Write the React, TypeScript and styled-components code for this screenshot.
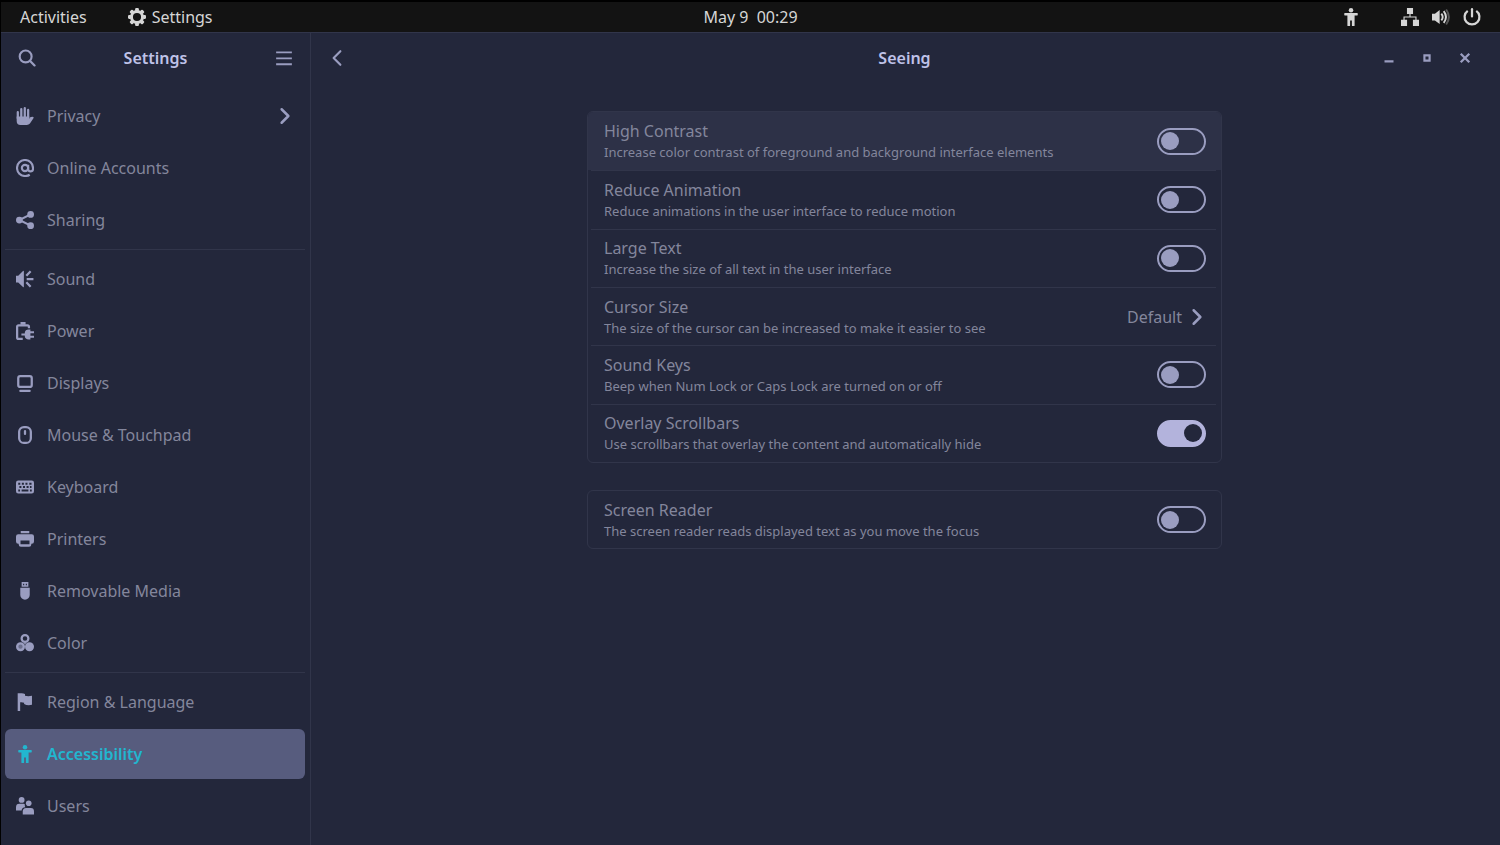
import React from "react";
import styled, { createGlobalStyle, css } from "styled-components";

const color = {
  bar: "#131313",
  barText: "#d6d6d6",
  window: "#23273b",
  line: "#31354a",
  rowHover: "#2d3147",
  text: "#83869c",
  heading: "#bfc2e8",
  icon: "#9a9dc0",
  active: "#575c7e",
  accent: "#22b6cf",
  switchOn: "#b3b3dc",
};

const GlobalStyle = createGlobalStyle`
  * { box-sizing: border-box; }
  body {
    margin: 0;
    background: #000;
    font-family: "Noto Sans", "Open Sans", sans-serif;
    font-size: 16px;
    color: ${color.text};
  }
  button { font: inherit; color: inherit; background: none; border: 0; padding: 0; }
  ul { list-style: none; margin: 0; padding: 0; }
`;

const Desktop = styled.div`
  min-height: 100vh;
  display: flex;
  flex-direction: column;
  padding-left: 1px;
`;

const TopBar = styled.header`
  display: grid;
  grid-template-columns: 1fr auto 1fr;
  align-items: center;
  height: 32px;
  padding: 0 19px;
  border-top: 2px solid #000;
  background: ${color.bar};
  color: ${color.barText};
`;

const BarGroup = styled.div<{ $end?: boolean; $gap: number }>`
  display: flex;
  align-items: center;
  gap: ${(p) => p.$gap}px;
  justify-content: ${(p) => (p.$end ? "flex-end" : "flex-start")};
`;

const BarButton = styled.button`
  display: flex;
  align-items: center;
  gap: 6px;
  white-space: pre;
`;

const Window = styled.div`
  flex: 1;
  display: grid;
  grid-template-columns: 310px 1fr;
  background: ${color.window};
  border-top: 1px solid ${color.line};
`;

const Sidebar = styled.aside`
  border-right: 1px solid ${color.line};
`;

const HeaderBar = styled.div`
  display: grid;
  grid-template-columns: 1fr auto 1fr;
  align-items: center;
  height: 50px;
  padding: 0 17px;
  color: ${color.icon};
`;

const Title = styled.h1`
  margin: 0;
  font-size: 16px;
  font-weight: 600;
  color: ${color.heading};
`;

const HeaderEnd = styled.div<{ $inset?: boolean }>`
  display: flex;
  justify-content: flex-end;
  gap: 20px;
  padding-right: ${(p) => (p.$inset ? 7 : 0)}px;
`;

const IconButton = styled.button`
  display: flex;
  justify-content: center;
  align-items: center;
  width: 18px;
  height: 18px;
`;

const Nav = styled.nav`
  padding: 8px 5px 12px 4px;
`;

const NavGroup = styled.ul`
  display: grid;
  gap: 2px;

  & + & {
    margin-top: 4px;
    padding-top: 4px;
    border-top: 1px solid ${color.line};
  }
`;

const NavLink = styled.a<{ $active?: boolean }>`
  display: flex;
  align-items: center;
  gap: 13px;
  height: 50px;
  padding: 0 11px;
  border-radius: 6px;
  color: inherit;
  text-decoration: none;

  svg { color: ${color.icon}; }

  ${(p) =>
    p.$active &&
    css`
      background: ${color.active};
      color: ${color.accent};
      font-weight: 600;
      svg { color: inherit; }
    `}
`;

const NavLabel = styled.span`
  flex: 1;
`;

const Content = styled.main`
  min-width: 0;
  padding-right: 2px;
`;

const Page = styled.div`
  max-width: 635px;
  margin: 0 auto;
  padding: 28px 0 24px;
  display: grid;
  gap: 27px;
`;

const Card = styled.ul<{ $rows: number }>`
  display: grid;
  grid-auto-rows: 1fr;
  min-height: ${(p) => (p.$rows > 1 ? 352 : 59)}px;
  border: 1px solid ${color.line};
  border-radius: 6px;
  overflow: hidden;
`;

const Row = styled.li<{ $lit?: boolean }>`
  display: grid;
  padding: 0 5px 0 3px;
  background: ${(p) => (p.$lit ? color.rowHover : "none")};
`;

const RowBody = styled.div`
  display: flex;
  align-items: center;
  justify-content: space-between;
  padding: 0 10px 0 13px;

  ${Row} + ${Row} > & {
    border-top: 1px solid ${color.line};
  }
`;

const RowText = styled.label`
  display: grid;
`;

const RowTitle = styled.span`
  line-height: 22px;
`;

const RowNote = styled.span`
  font-size: 13px;
  line-height: 20px;
`;

const Switch = styled.input`
  appearance: none;
  display: flex;
  align-items: center;
  width: 49px;
  height: 27px;
  margin: 0;
  padding: 0 2px;
  border: 2px solid ${color.icon};
  border-radius: 14px;

  &::before {
    content: "";
    width: 18px;
    height: 18px;
    border-radius: 50%;
    background: ${color.icon};
  }

  &:checked {
    justify-content: flex-end;
    background: ${color.switchOn};
    border-color: ${color.switchOn};
  }

  &:checked::before {
    background: ${color.window};
  }
`;

const ValueButton = styled.button`
  display: flex;
  align-items: center;
  gap: 6px;

  svg { color: ${color.icon}; }
`;

const Glyph = styled.svg.attrs({
  viewBox: "0 0 16 16",
  fill: "currentColor",
  "aria-hidden": true,
})`
  display: block;
  flex: none;
  width: 18px;
  height: 18px;
`;

const stroke = {
  fill: "none",
  stroke: "currentColor",
  strokeWidth: 2,
} as const;

const icons = {
  gear: (
    <>
      <circle cx="8" cy="8" r="4.9" {...stroke} strokeWidth={2.6} />
      {[0, 45, 90, 135, 180, 225, 270, 315].map((a) => (
        <rect key={a} x="6.3" y="0" width="3.4" height="3" rx="1" transform={`rotate(${a} 8 8)`} />
      ))}
    </>
  ),
  person: (
    <>
      <circle cx="8" cy="2" r="2" />
      <path d="M2.500 4.500h11a.5.5 0 0 1 .5.5v1.100a.5.5 0 0 1-.5.5H11.200V15.500a.5.5 0 0 1-.5.5H9.300a.5.5 0 0 1-.5-.5V11H7.200v4.500a.5.5 0 0 1-.5.5H5.300a.5.5 0 0 1-.5-.5V6.600H2.500a.5.5 0 0 1-.5-.5V5a.5.5 0 0 1 .5-.5z" />
    </>
  ),
  network: (
    <>
      <path d="M5.300 0h5.400v5.300H5.300zM0 10.500h5.400V16H0zM10.600 10.500H16V16h-5.400z" />
      <path d="M8 5v3M2.700 11V8h10.600v3" {...stroke} strokeWidth={1} />
    </>
  ),
  volume: (
    <>
      <path d="M0 5h2.600L6.800 1.800v12.400L2.600 11H0z" />
      <path d="M8.300 5q2.400 3 0 6M10.400 2.800q4 5.200 0 10.400" {...stroke} strokeWidth={1.7} />
      <path d="M12.600 1.300q4.800 6.700 0 13.400" {...stroke} strokeWidth={1.7} opacity=".35" />
    </>
  ),
  power: (
    <>
      <path d="M4.200 2.600a6.600 6.600 0 1 0 7.600 0" {...stroke} />
      <path d="M8 1v6.500" {...stroke} strokeLinecap="round" />
    </>
  ),
  search: (
    <>
      <circle cx="6.800" cy="6.600" r="5.300" {...stroke} strokeWidth={1.9} />
      <path d="M10.800 10.600L14.700 14.600" {...stroke} strokeLinecap="round" />
    </>
  ),
  menu: <path d="M1 3h14M1 8.300h14M1 13.600h14" {...stroke} strokeWidth={1.7} />,
  back: <path d="M11 2L5 8l6 6" {...stroke} strokeWidth={1.9} strokeLinecap="round" strokeLinejoin="round" />,
  next: <path d="M5 2L11 8L5 14" {...stroke} strokeWidth={2.2} strokeLinecap="round" strokeLinejoin="round" />,
  minimize: <path d="M4 11h8" {...stroke} />,
  maximize: <path d="M5.700 5.700h4.600v4.600H5.700z" {...stroke} strokeWidth={1.9} />,
  close: <path d="M4.200 4.200l7.600 7.600M11.800 4.200l-7.600 7.600" {...stroke} />,
  hand: (
    <>
      <path d="M.6 8.500h11.200v2.200q.4-2.200 2.700-2.100q1.700.2 1 1.300L12.400 14.700Q11.300 16 9.600 16H4Q.6 16 .6 12.500z" />
      <path d="M1.600 10V4.600M4.700 10V1.800M7.800 10V1M10.800 10V2.600" {...stroke} strokeLinecap="round" />
    </>
  ),
  at: (
    <>
      <circle cx="8" cy="8" r="2.800" {...stroke} strokeWidth={1.9} />
      <path d="M12.200 14Q10.300 15.200 8 15.100A7.100 7.100 0 1 1 15.100 8v.8a2.150 2.150 0 0 1-4.300 0V5" {...stroke} strokeWidth={1.9} />
    </>
  ),
  share: (
    <>
      <circle cx="3" cy="8" r="3" />
      <circle cx="13" cy="3" r="3" />
      <circle cx="13" cy="13" r="3" />
      <path d="M13 3L3 8l10 5" {...stroke} strokeWidth={1.9} />
    </>
  ),
  sound: (
    <>
      <path d="M0 5h2L6.200.900q.8-.6.800.4v13.400q0 1-.8.400L2 11H0z" />
      <path d="M9.200 5.200L13 1.200M9.500 8h6M9.200 10.800L13 14.800" {...stroke} />
    </>
  ),
  battery: (
    <>
      <path d="M11.500 5.500V4.300q0-1.300-1.300-1.300H2.300Q1 3 1 4.300v9.400Q1 15 2.300 15H6" {...stroke} />
      <path d="M4 0h4.500v2.500H4zM12.800 6.700v8.800h-1.600q-3 0-3.400-2.800V9.500q.4-2.800 3.400-2.800z" />
      <path d="M4.800 11.100h4M12 9.100h4M12 13.100h4" {...stroke} strokeWidth={1.8} />
    </>
  ),
  display: (
    <>
      <rect x="2" y="1.900" width="12" height="9.600" rx="1.800" {...stroke} />
      <path d="M3.800 15h8.400" {...stroke} strokeLinecap="round" strokeWidth={1.8} />
    </>
  ),
  mouse: (
    <>
      <rect x="2.800" y="1" width="10.400" height="14" rx="4.200" {...stroke} />
      <path d="M8 4.500v2.600" {...stroke} strokeLinecap="round" />
    </>
  ),
  keyboard: (
    <path
      fillRule="evenodd"
      d="M2 2.200h12a2 2 0 0 1 2 2v7.600a2 2 0 0 1-2 2H2a2 2 0 0 1-2-2V4.200a2 2 0 0 1 2-2zM2 4.200v1.800h1.800V4.200zM5.200 4.200v1.800H7V4.200zM8.400 4.200v1.800h1.800V4.200zM11.800 4.200v1.800h2V4.200zM3 7.200v1.700h1.800V7.200zM6.200 7.200v1.700H8V7.200zM9.400 7.200v1.700h1.800V7.200zM12.400 7.200v1.700h1.400V7.200zM2 10.200v1.700h1.600v-1.700zM5 10.200v1.700h6v-1.700zM12.400 10.200v1.700H14v-1.700z"
    />
  ),
  printer: (
    <path
      fillRule="evenodd"
      d="M4.200.8h7.600v2H4.200zM2 3.800h12a2 2 0 0 1 2 2v4.400a2 2 0 0 1-2 2h-.4v.6a2 2 0 0 1-2 2H4.400a2 2 0 0 1-2-2v-.6H2a2 2 0 0 1-2-2V5.800a2 2 0 0 1 2-2zM4 9.400v3.200h8V9.400z"
    />
  ),
  usb: (
    <path
      fillRule="evenodd"
      d="M5 0h6v4.200H5zM6.300 1.500v1.400h1V1.500zM8.700 1.500v1.400h1V1.500zM3.800 5h8.400v6.500a4.200 4.200 0 0 1-8.400 0z"
    />
  ),
  colors: (
    <>
      <circle cx="8" cy="4" r="3" {...stroke} />
      <circle cx="4" cy="11.300" r="4" />
      <circle cx="12" cy="11.300" r="4" />
      <circle cx="4" cy="11.300" r="1.900" fill={color.window} opacity=".4" />
      <path d="M8 7.200l1 1.800H7z" />
    </>
  ),
  flag: <path d="M1.500.300h2Q6-.2 8 .900v1.500q2.500.8 6.200.100v8q-4 1-7-.700V8.600Q5 7.900 3.700 8.300V16H1.500z" />,
  users: (
    <>
      <circle cx="5" cy="2.600" r="2.600" />
      <circle cx="11.300" cy="5.600" r="2.500" />
      <path d="M0 12V9q0-3 3-3h3.600q1 0 1.300.6Q7.500 8 8.300 9Q5 9.300 5 12z" />
      <path d="M6 15.500V13q0-3.300 3-3.300h4.200q2.800 0 2.800 3v2.800z" />
    </>
  ),
};

type IconName = keyof typeof icons;

const Icon = ({ name }: { name: IconName }) => <Glyph>{icons[name]}</Glyph>;

const navGroups: { label: string; icon: IconName; more?: boolean; active?: boolean }[][] = [
  [
    { label: "Privacy", icon: "hand", more: true },
    { label: "Online Accounts", icon: "at" },
    { label: "Sharing", icon: "share" },
  ],
  [
    { label: "Sound", icon: "sound" },
    { label: "Power", icon: "battery" },
    { label: "Displays", icon: "display" },
    { label: "Mouse & Touchpad", icon: "mouse" },
    { label: "Keyboard", icon: "keyboard" },
    { label: "Printers", icon: "printer" },
    { label: "Removable Media", icon: "usb" },
    { label: "Color", icon: "colors" },
  ],
  [
    { label: "Region & Language", icon: "flag" },
    { label: "Accessibility", icon: "person", active: true },
    { label: "Users", icon: "users" },
  ],
];

type Setting = { id: string; title: string; note: string; on?: boolean; value?: string; lit?: boolean };

const cards: Setting[][] = [
  [
    {
      id: "contrast",
      title: "High Contrast",
      note: "Increase color contrast of foreground and background interface elements",
      lit: true,
    },
    { id: "animation", title: "Reduce Animation", note: "Reduce animations in the user interface to reduce motion" },
    { id: "large-text", title: "Large Text", note: "Increase the size of all text in the user interface" },
    {
      id: "cursor",
      title: "Cursor Size",
      note: "The size of the cursor can be increased to make it easier to see",
      value: "Default",
    },
    { id: "sound-keys", title: "Sound Keys", note: "Beep when Num Lock or Caps Lock are turned on or off" },
    {
      id: "scrollbars",
      title: "Overlay Scrollbars",
      note: "Use scrollbars that overlay the content and automatically hide",
      on: true,
    },
  ],
  [{ id: "reader", title: "Screen Reader", note: "The screen reader reads displayed text as you move the focus" }],
];

export default function App() {
  return (
    <Desktop>
      <GlobalStyle />
      <TopBar>
        <BarGroup $gap={41}>
          <BarButton>Activities</BarButton>
          <BarButton>
            <Icon name="gear" />
            Settings
          </BarButton>
        </BarGroup>
        <BarButton>May 9  00:29</BarButton>
        <BarGroup $end $gap={13}>
          <BarGroup $gap={41}>
            <BarButton aria-label="Accessibility menu">
              <Icon name="person" />
            </BarButton>
            <BarButton aria-label="Network">
              <Icon name="network" />
            </BarButton>
          </BarGroup>
          <BarButton aria-label="Volume">
            <Icon name="volume" />
          </BarButton>
          <BarButton aria-label="Power menu">
            <Icon name="power" />
          </BarButton>
        </BarGroup>
      </TopBar>
      <Window>
        <Sidebar>
          <HeaderBar>
            <IconButton aria-label="Search">
              <Icon name="search" />
            </IconButton>
            <Title>Settings</Title>
            <HeaderEnd>
              <IconButton aria-label="Menu">
                <Icon name="menu" />
              </IconButton>
            </HeaderEnd>
          </HeaderBar>
          <Nav>
            {navGroups.map((group, i) => (
              <NavGroup key={i}>
                {group.map((item) => (
                  <li key={item.label}>
                    <NavLink href="#" $active={item.active}>
                      <Icon name={item.icon} />
                      <NavLabel>{item.label}</NavLabel>
                      {item.more && <Icon name="next" />}
                    </NavLink>
                  </li>
                ))}
              </NavGroup>
            ))}
          </Nav>
        </Sidebar>
        <Content>
          <HeaderBar>
            <IconButton aria-label="Back">
              <Icon name="back" />
            </IconButton>
            <Title as="h2">Seeing</Title>
            <HeaderEnd $inset>
              <IconButton aria-label="Minimize">
                <Icon name="minimize" />
              </IconButton>
              <IconButton aria-label="Maximize">
                <Icon name="maximize" />
              </IconButton>
              <IconButton aria-label="Close">
                <Icon name="close" />
              </IconButton>
            </HeaderEnd>
          </HeaderBar>
          <Page>
            {cards.map((rows, i) => (
              <Card key={i} $rows={rows.length}>
                {rows.map((s) => (
                  <Row key={s.id} $lit={s.lit}>
                    <RowBody>
                      <RowText htmlFor={s.id}>
                        <RowTitle>{s.title}</RowTitle>
                        <RowNote>{s.note}</RowNote>
                      </RowText>
                      {s.value ? (
                        <ValueButton id={s.id}>
                          {s.value}
                          <Icon name="next" />
                        </ValueButton>
                      ) : (
                        <Switch type="checkbox" role="switch" id={s.id} defaultChecked={s.on} />
                      )}
                    </RowBody>
                  </Row>
                ))}
              </Card>
            ))}
          </Page>
        </Content>
      </Window>
    </Desktop>
  );
}
